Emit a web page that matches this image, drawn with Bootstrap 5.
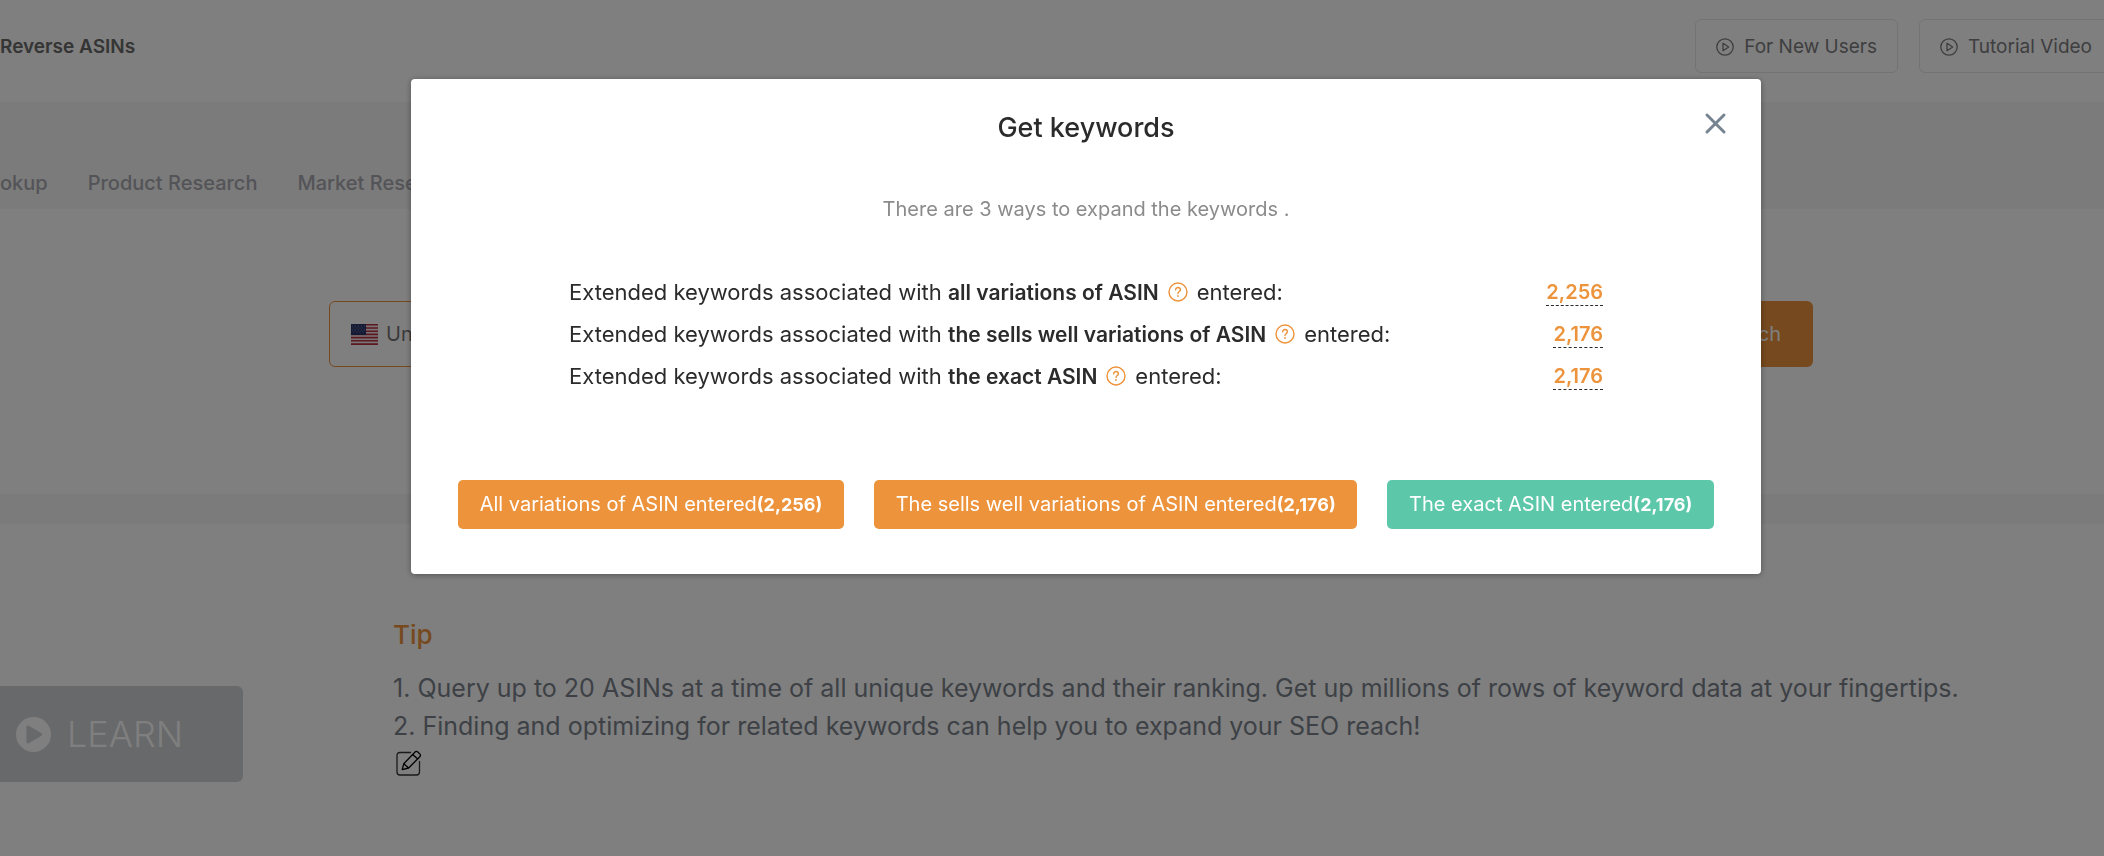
<!DOCTYPE html>
<html lang="en">
<head>
<meta charset="utf-8">
<meta name="viewport" content="width=device-width, initial-scale=1">
<title>Reverse ASINs</title>
<link href="https://cdn.jsdelivr.net/npm/bootstrap@5.3.0/dist/css/bootstrap.min.css" rel="stylesheet">
<style>
  :root { --brand: #ec933c; --mint: #5cc7a9; --offset: 68px; }
  body { font-family: Inter, "Liberation Sans", sans-serif; font-size: 20px; line-height: 24px; background: #f6f6f6; overflow: hidden; }
  svg { display: block; flex: none; }

  .page-head { height: 102px; }
  .page-title { font-size: 19px; line-height: 24px; color: #6a6a6a; }
  .help-links { gap: 21px; padding-top: 19px; margin-right: -9px; }
  .help-link { height: 54px; border: 1px solid #e6e6e6; border-radius: 6px; padding: 2px 20px 0; gap: 10px; color: #7c7d80; font-size: 19px; }
  .tabs { height: 107px; padding-bottom: 14px; gap: 40px; }
  .tabs a { font-size: 20px; line-height: 24px; color: #a8a9b0; }

  .search-area { height: 285px; padding: 92px 291px 0 329px; }
  .search-row { height: 66px; }
  .market { width: 300px; border: 1px solid var(--brand); border-radius: 6px 0 0 6px; padding: 0 21px; gap: 8px; }
  .market select { border: 0; padding: 0; background: none; appearance: none; color: #747474; font-size: 20px; }
  .asin-box { border-color: var(--brand); border-radius: 0; }
  .search-btn { width: 150px; border-radius: 0 6px 6px 0; background: var(--brand); color: #fff; padding-right: 31px; text-align: right; font-size: 20px; }

  .tips { margin-top: 30px; height: 332px; padding-top: 92px; }
  .learn { width: 243px; height: 96px; margin-top: 70px; border-radius: 0 6px 6px 0; background: #d0d2d6; color: #fff; padding-left: 16px; gap: 16px; font-size: 36px; font-weight: 300; }
  .tip-text { padding-left: 150px; color: #7a838c; font-size: 25px; line-height: 38px; }
  .tip-text h2 { font-size: 26px; line-height: 38px; color: var(--brand); margin-bottom: 15px; }
  .edit-btn { border: 0; background: none; padding: 5px 3px; }

  .modal { padding-left: var(--offset); }
  .modal-dialog { max-width: 1350px; margin-top: 79px; }
  .modal-content { border: 0; border-radius: 4px; padding: 30px 47px 45px; color: #2b2b2b; box-shadow: 0 1px 6px rgba(0, 0, 0, .35); }
  .modal-title { font-size: 27px; line-height: 38px; }
  .close-x { top: 33px; right: 34px; border: 0; background: none; padding: 0; }
  .lead-in { color: #8b8b8b; font-size: 20px; line-height: 24px; margin: 50px 0 50px; }
  .ways { padding: 0 111px; margin-bottom: 83px; }
  .way { line-height: 42px; height: 42px; }
  .way-label { gap: 9px; font-size: 22px; }
  .way-label b, .count { font-weight: 600; }
  .way-label b { font-size: 21px; }
  .count { color: var(--brand); line-height: 26px; border-bottom: 1px dashed #2b2b2b; text-decoration: none; }
  .choices { gap: 30px; }
  .choice { height: 49px; border: 0; border-radius: 5px; background: var(--brand); color: #fff; font-size: 20px; padding: 0; }
  .choice b { font-size: 18px; }
  .choice-exact { background: var(--mint); }
</style>
</head>
<body>
<svg class="d-none" aria-hidden="true">
  <symbol id="play" viewBox="0 0 18 18"><g fill="none" stroke="currentColor" stroke-width="1.3" stroke-linejoin="round"><circle cx="9" cy="9" r="8.2"/><path d="M7 5.3v7.4L12.7 9z"/></g></symbol>
  <symbol id="help" viewBox="0 0 20 20"><g fill="none" stroke="#ec933c" stroke-width="1.4" stroke-linecap="round"><circle cx="10" cy="10" r="9"/><path d="M7.6 7.900c0-1.500 1-2.400 2.400-2.400s2.400 1 2.400 2.200c0 1.700-2.400 1.900-2.400 3.900"/></g><circle cx="10" cy="14" r=".9" fill="#ec933c"/></symbol>
</svg>

<header class="page-head bg-white d-flex justify-content-between overflow-hidden">
  <h1 class="page-title fw-semibold mb-0 align-self-center pb-2">Reverse ASINs</h1>
  <div class="help-links d-flex flex-nowrap">
    <a href="#" class="help-link d-flex align-items-center text-nowrap text-decoration-none"><svg width="18" height="18"><use href="#play"/></svg>For New Users</a>
    <a href="#" class="help-link d-flex align-items-center text-nowrap text-decoration-none"><svg width="18" height="18"><use href="#play"/></svg>Tutorial Video</a>
  </div>
</header>

<nav class="tabs d-flex align-items-end overflow-hidden">
  <a href="#" class="fw-medium text-decoration-none">okup</a>
  <a href="#" class="fw-medium text-decoration-none text-nowrap">Product Research</a>
  <a href="#" class="fw-medium text-decoration-none text-nowrap">Market Research</a>
</nav>

<main>
  <section class="search-area bg-white">
    <form class="search-row d-flex">
      <div class="market d-flex align-items-center flex-shrink-0">
        <svg width="27" height="21" viewBox="0 0 27 21" aria-hidden="true">
          <path fill="#f3e8ea" d="M0 0h27v21H0z"/>
          <path stroke="#b83244" stroke-width="1.6" d="M0 .8h27M0 4h27M0 7.2h27M0 10.4h27M0 13.6h27M0 16.8h27M0 20.1h27"/>
          <path fill="#2b3468" d="M0 0h15v11H0z"/>
          <path stroke="#8088b0" stroke-width="1" stroke-dasharray="1 2" d="M1 2h13M2.500 4h12M1 6h13M2.500 8h12"/>
        </svg>
        <select id="market" aria-label="Marketplace"><option>United States</option></select>
      </div>
      <input class="asin-box form-control h-100" type="text" aria-label="ASINs">
      <button type="button" class="search-btn btn flex-shrink-0">Search</button>
    </form>
  </section>

  <section class="tips bg-white d-flex align-items-start">
    <button type="button" class="learn btn border-0 d-flex align-items-center flex-shrink-0">
      <svg width="35" height="35" viewBox="0 0 35 35" aria-hidden="true"><circle cx="17.500" cy="17.500" r="17.500" fill="#fff"/><path d="M10.500 10.500v14q0 3 2.600 1.500l12-7q2-1.500 0-3l-12-7q-2.600-1.500-2.600 1.500z" fill="#d0d2d6"/></svg>
      LEARN
    </button>
    <div class="tip-text">
      <h2 class="fw-medium">Tip</h2>
      <div>1. Query up to 20 ASINs at a time of all unique keywords and their ranking. Get up millions of rows of keyword data at your fingertips.</div>
      <div>2. Finding and optimizing for related keywords can help you to expand your SEO reach!</div>
      <button type="button" class="edit-btn" aria-label="Edit">
        <svg width="26" height="26" viewBox="0 0 26 26" fill="none" stroke="#000" stroke-width="1.300" stroke-linejoin="round" stroke-linecap="round"><path stroke="#333" d="M14.500 2.500H4Q1 2.500 1 5.500V22Q1 25 4 25H20.500Q23.500 25 23.500 22V11.500"/><path d="M6.200 19.700l1.600-6L18.800 2.200q1.500-1.500 3-.2l2 1.900q1.300 1.400 0 2.900L12.600 18zM7.800 13.700l4.800 4.300M16.700 4.500l5 4.500"/></svg>
      </button>
    </div>
  </section>
</main>

<div class="modal-backdrop show"></div>
<div class="modal d-block" role="dialog" aria-labelledby="dlg-title">
  <div class="modal-dialog mb-0">
    <div class="modal-content">
      <h2 id="dlg-title" class="modal-title fw-medium text-center">Get keywords</h2>
      <button type="button" class="close-x position-absolute" aria-label="Close">
        <svg width="23" height="23" viewBox="0 0 23 23" stroke="#768391" stroke-width="3" stroke-linecap="round"><path d="M3 3l17 17M20 3L3 20"/></svg>
      </button>
      <p class="lead-in text-center">There are 3 ways to expand the keywords .</p>
      <div class="ways">
        <div class="way d-flex justify-content-between align-items-center">
          <div class="way-label d-flex align-items-center text-nowrap"><span>Extended keywords associated with <b>all variations of ASIN</b></span><svg width="20" height="20"><use href="#help"/></svg>entered:</div>
          <a href="#" class="count">2,256</a>
        </div>
        <div class="way d-flex justify-content-between align-items-center">
          <div class="way-label d-flex align-items-center text-nowrap"><span>Extended keywords associated with <b>the sells well variations of ASIN</b></span><svg width="20" height="20"><use href="#help"/></svg>entered:</div>
          <a href="#" class="count">2,176</a>
        </div>
        <div class="way d-flex justify-content-between align-items-center">
          <div class="way-label d-flex align-items-center text-nowrap"><span>Extended keywords associated with <b>the exact ASIN</b></span><svg width="20" height="20"><use href="#help"/></svg>entered:</div>
          <a href="#" class="count">2,176</a>
        </div>
      </div>
      <div class="choices d-flex">
        <button type="button" class="choice flex-fill">All variations of ASIN entered<b>(2,256)</b></button>
        <button type="button" class="choice flex-fill">The sells well variations of ASIN entered<b>(2,176)</b></button>
        <button type="button" class="choice choice-exact flex-fill">The exact ASIN entered<b>(2,176)</b></button>
      </div>
    </div>
  </div>
</div>
<script src="https://cdn.jsdelivr.net/npm/bootstrap@5.3.0/dist/js/bootstrap.bundle.min.js"></script>
</body>
</html>
